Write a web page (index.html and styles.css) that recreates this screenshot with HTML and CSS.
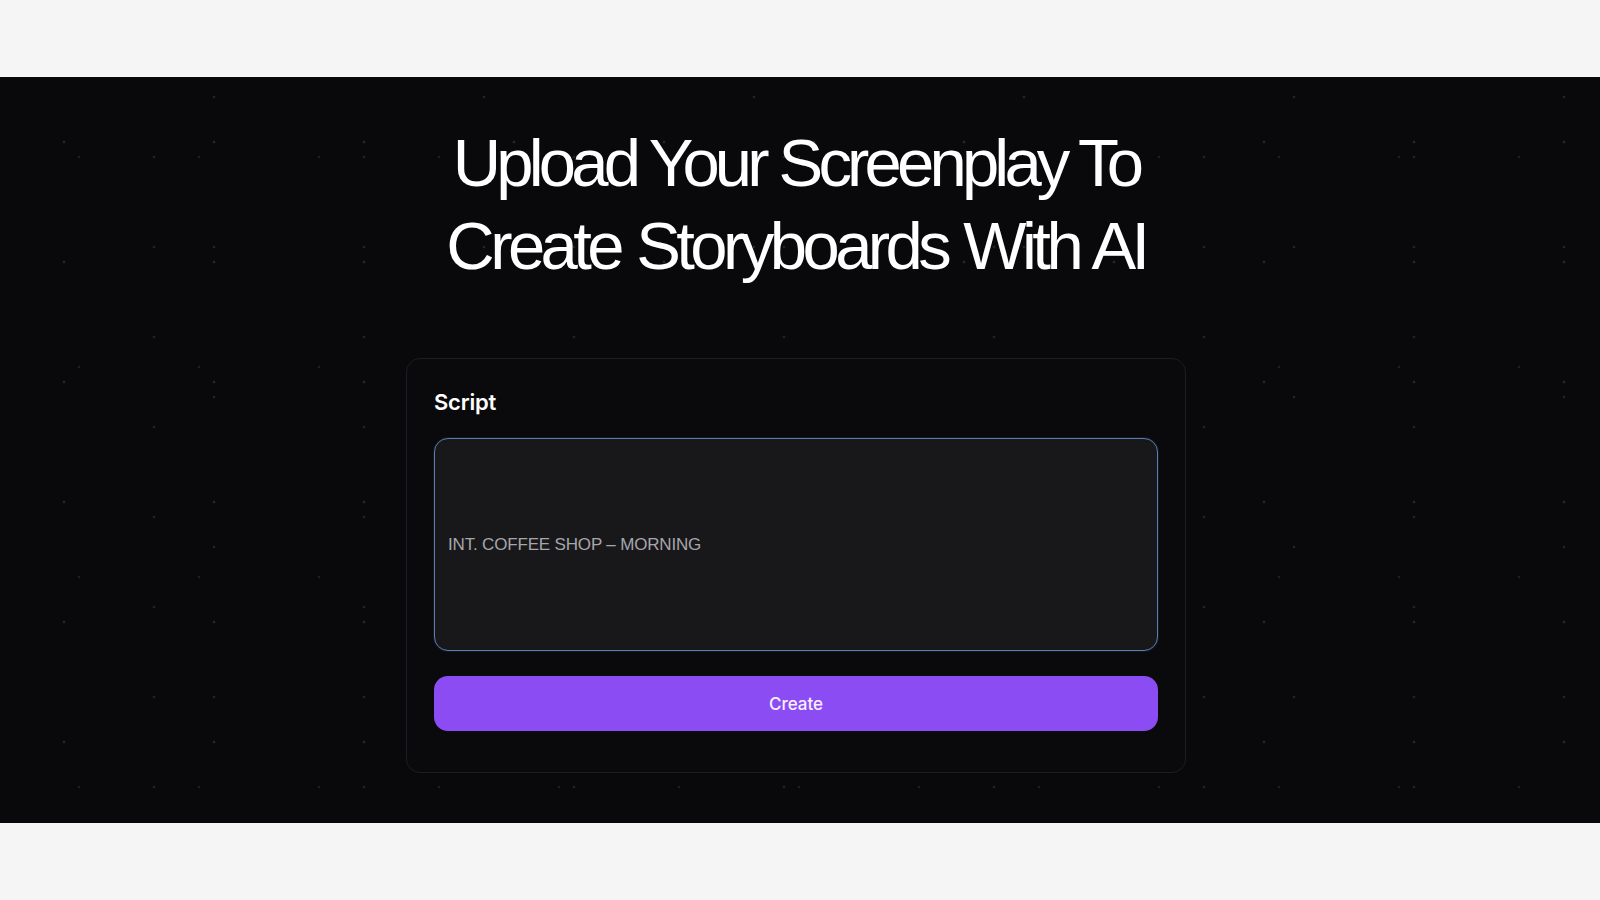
FILE: index.html
```html
<!DOCTYPE html>
<html lang="en">
<head>
<meta charset="utf-8">
<title>Upload Your Screenplay</title>
<link rel="stylesheet" href="styles.css">
</head>
<body>
  <div class="top-band"></div>
  <section class="hero">
    <h1 class="hero-title"><span class="line">Upload Your Screenplay To</span><span class="line line-wide">Create Storyboards With AI</span></h1>
    <form class="card">
      <label class="card-label" for="script">Script</label>
      <textarea id="script" class="script-input" placeholder="INT. COFFEE SHOP – MORNING"></textarea>
      <button type="button" class="create-btn">Create</button>
    </form>
  </section>
  <div class="bottom-band"></div>
</body>
</html>
```
FILE: styles.css
```css
* { box-sizing: border-box; }

html, body {
  margin: 0;
  padding: 0;
  background: #f5f5f5;
  height: 900px;
  overflow: hidden;
}

.top-band {
  height: 77px;
  background: #f5f5f5;
  border-bottom: 1px solid #fafafa;
}

.bottom-band {
  height: 77px;
  background: #f5f5f5;
}

.hero {
  height: 746px;
  background-color: #09090c;
  background-image:
    radial-gradient(circle, rgba(255,255,255,0.12) 0.9px, transparent 1.7px),
    radial-gradient(circle, rgba(255,255,255,0.10) 0.9px, transparent 1.7px),
    radial-gradient(circle, rgba(255,255,255,0.11) 0.9px, transparent 1.7px),
    radial-gradient(circle, rgba(255,255,255,0.09) 0.9px, transparent 1.7px);
  background-size: 150px 120px, 210px 90px, 270px 150px, 120px 210px;
  background-position: -11px 5px, 49px 35px, 79px -55px, 19px -25px;
  display: flex;
  flex-direction: column;
  align-items: center;
  padding: 44px 8px 0 0;
}

.hero-title {
  margin: 0;
  font-family: "Liberation Sans", Arial, sans-serif;
  font-weight: 400;
  font-size: 67px;
  line-height: 83px;
  letter-spacing: -0.072em;
  color: #ffffff;
  text-align: center;
  display: flex;
  flex-direction: column;
  align-items: center;
}

.line-wide {
  word-spacing: 0.03em;
  letter-spacing: -0.068em;
}

.card {
  margin-top: 71px;
  width: 780px;
  background: #0a0a0d;
  border: 1px solid #1d1d22;
  border-radius: 14px;
  padding: 29px 27px 41px;
  display: flex;
  flex-direction: column;
}

.card-label {
  font-family: Inter, "Noto Sans", sans-serif;
  font-weight: 600;
  font-size: 22px;
  line-height: 28px;
  color: #ffffff;
  letter-spacing: -0.01em;
}

.script-input {
  margin-top: 22px;
  height: 213px;
  width: 100%;
  resize: none;
  background: #18181b;
  border: 1px solid #5b7cb3;
  border-radius: 14px;
  outline: none;
  padding: 94px 13px 0;
  font-family: "Liberation Sans", Arial, sans-serif;
  font-size: 17px;
  line-height: 24px;
  letter-spacing: -0.01em;
  color: #e4e4e7;
  box-shadow: 0 0 0 1px rgba(91,124,179,0.12);
}

.script-input::placeholder {
  color: #a6a6ab;
  opacity: 1;
}

.create-btn {
  margin-top: 25px;
  height: 55px;
  width: 100%;
  border: none;
  border-radius: 14px;
  background: #8c4cf4;
  color: #f7f0ff;
  font-family: Inter, "Noto Sans", sans-serif;
  font-weight: 500;
  font-size: 17px;
  cursor: pointer;
}
```
